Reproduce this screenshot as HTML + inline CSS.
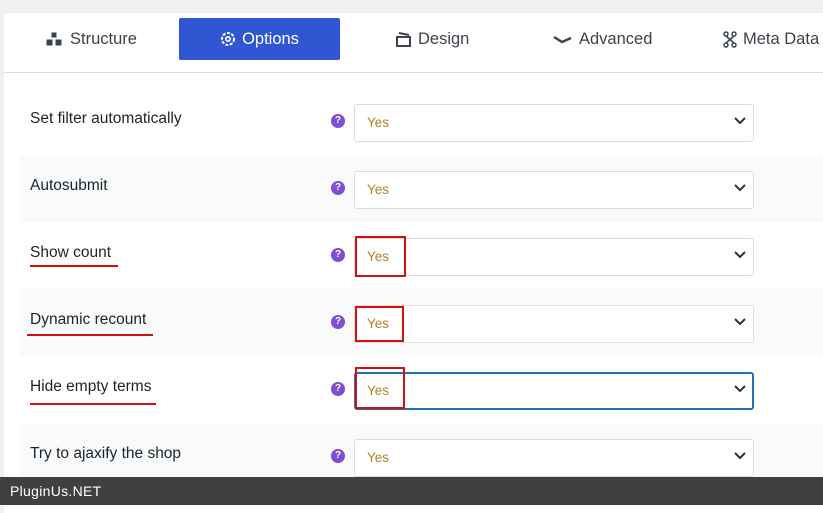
<!DOCTYPE html>
<html><head><style>
*{box-sizing:border-box;margin:0;padding:0}
body{width:823px;height:505px;overflow:hidden;background:#f0f0f1;font-family:"Liberation Sans",sans-serif;position:relative}
.card{position:absolute;left:4px;top:13px;width:830px;height:500px;background:#fff;border-top-left-radius:3px}
.tabs{position:absolute;left:0;top:0;width:830px;height:60px;border-bottom:1px solid #dcdcde}
.tab{position:absolute;top:5px;height:42px;line-height:42px;font-size:16.5px;color:#3c434a;display:flex;align-items:center;gap:6px}
.tab.act{background:#3056d3;color:#fff;border-radius:2px;justify-content:center;width:161px;left:175px}
.row{position:absolute;left:20px;width:820px;height:67px}
.alt{background:#f9fafb}
.lbl{position:absolute;left:10px;top:22px;font-size:15.5px;color:#1d2327}
.q{position:absolute;left:311px;top:26px;width:14px;height:14px;border-radius:50%;background:#7e4fd1;color:#fff;font-size:10px;font-weight:bold;text-align:center;line-height:14px}
.sel{position:absolute;left:334px;top:16px;width:400px;height:38px;border:1px solid #dcdcde;border-radius:3px;background:#fff;font-size:13.5px;color:#b0822a;padding:10px 12px}
.sel svg{position:absolute;right:7px;top:12px}
.focus{border:2px solid #2271b1;padding:9px 11px}
.rb{position:absolute;border:2px solid #d40f0f}
.ul{position:absolute;height:2px;background:#d40f0f}
.foot{position:absolute;left:0;top:477px;width:823px;height:28px;background:#404040;color:#fff;font-size:14px;line-height:28px;padding-left:10px;letter-spacing:.3px}
</style></head><body>
<div class="card">
<div class="tabs">
<div class="tab" style="left:41px"><svg width="19" height="16" viewBox="0 0 19 16"><path d="M6 1h6v6H6zM1 8h7v7H1zM10 8h7v7h-7z" fill="#3c434a" stroke="#fff" stroke-width="1"/></svg>Structure</div>
<div class="tab act"><svg width="16" height="16" viewBox="0 0 16 16"><circle cx="8" cy="8" r="6" fill="none" stroke="#fff" stroke-width="2" stroke-dasharray="3 1.5"/><circle cx="8" cy="8" r="2.2" fill="none" stroke="#fff" stroke-width="1.6"/></svg>Options</div>
<div class="tab" style="left:391px"><svg width="17" height="15" viewBox="0 0 17 15"><path d="M2 5h13v9H2z M4 1l10 2" fill="none" stroke="#3c434a" stroke-width="2"/></svg>Design</div>
<div class="tab" style="left:549px"><svg width="20" height="10" viewBox="0 0 20 10"><path d="M1 3l8 5 9-4" fill="none" stroke="#3c434a" stroke-width="2.5"/></svg>Advanced</div>
<div class="tab" style="left:719px"><svg width="14" height="17" viewBox="0 0 14 17"><circle cx="3" cy="3" r="2" fill="none" stroke="#3c434a" stroke-width="1.5"/><circle cx="11" cy="3" r="2" fill="none" stroke="#3c434a" stroke-width="1.5"/><circle cx="3" cy="14" r="2" fill="none" stroke="#3c434a" stroke-width="1.5"/><circle cx="11" cy="14" r="2" fill="none" stroke="#3c434a" stroke-width="1.5"/><path d="M3 5l8 7M11 5l-8 7" stroke="#3c434a" stroke-width="1.5"/></svg>Meta Data</div>
</div>
</div>
<div class="row" style="top:88px"><div class="lbl">Set filter automatically</div><div class="q">?</div><div class="sel">Yes<svg width="12" height="8"><path d="M1 1l5 5 5-5" fill="none" stroke="#333" stroke-width="2"/></svg></div></div>
<div class="row alt" style="top:155px"><div class="lbl">Autosubmit</div><div class="q">?</div><div class="sel">Yes<svg width="12" height="8"><path d="M1 1l5 5 5-5" fill="none" stroke="#333" stroke-width="2"/></svg></div></div>
<div class="row" style="top:222px"><div class="lbl">Show count</div><div class="q">?</div><div class="sel">Yes<svg width="12" height="8"><path d="M1 1l5 5 5-5" fill="none" stroke="#333" stroke-width="2"/></svg></div></div>
<div class="row alt" style="top:289px"><div class="lbl">Dynamic recount</div><div class="q">?</div><div class="sel">Yes<svg width="12" height="8"><path d="M1 1l5 5 5-5" fill="none" stroke="#333" stroke-width="2"/></svg></div></div>
<div class="row" style="top:356px"><div class="lbl">Hide empty terms</div><div class="q">?</div><div class="sel focus">Yes<svg width="12" height="8" style="right:6px;top:11px"><path d="M1 1l5 5 5-5" fill="none" stroke="#333" stroke-width="2"/></svg></div></div>
<div class="row alt" style="top:423px"><div class="lbl">Try to ajaxify the shop</div><div class="q">?</div><div class="sel">Yes<svg width="12" height="8"><path d="M1 1l5 5 5-5" fill="none" stroke="#333" stroke-width="2"/></svg></div></div>
<div class="rb" style="left:355px;top:236px;width:51px;height:41px"></div>
<div class="rb" style="left:355px;top:306px;width:49px;height:36px"></div>
<div class="rb" style="left:355px;top:367px;width:50px;height:42px"></div>
<div class="ul" style="left:30px;top:265px;width:88px"></div>
<div class="ul" style="left:27px;top:334px;width:126px"></div>
<div class="ul" style="left:30px;top:403px;width:126px"></div>
<div class="foot">PluginUs.NET</div>
</body></html>
